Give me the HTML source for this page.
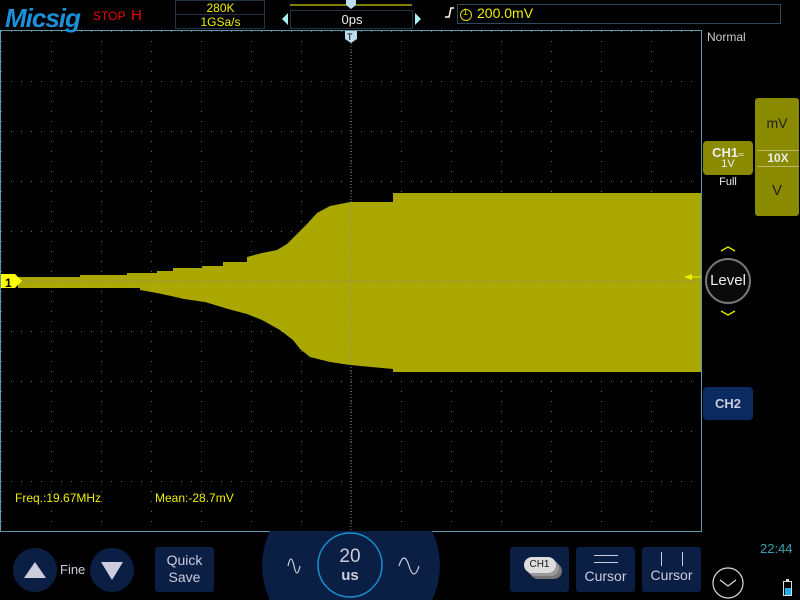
<!DOCTYPE html><html><head><style>
body{margin:0;width:800px;height:600px;background:#000;overflow:hidden;position:relative;font-family:"Liberation Sans",sans-serif}
.a{position:absolute}
.btn{position:absolute;background:#0b1f45;border-radius:3px;color:#ccd;text-align:center;font-size:14px}
</style></head><body>
<svg class="a" style="left:0;top:0" width="800" height="600">
<defs><pattern id="g" x="1" y="31" width="50" height="50" patternUnits="userSpaceOnUse">
<g fill="#666"><rect x="0" y="0" width="1" height="1"/><rect x="10" y="0" width="1" height="1"/><rect x="20" y="0" width="1" height="1"/><rect x="30" y="0" width="1" height="1"/><rect x="40" y="0" width="1" height="1"/><rect x="0" y="10" width="1" height="1"/><rect x="0" y="20" width="1" height="1"/><rect x="0" y="30" width="1" height="1"/><rect x="0" y="40" width="1" height="1"/></g></pattern></defs>
<rect x="1" y="31" width="700" height="500" fill="url(#g)"/>
<polygon fill="#aaa800" points="18,277 80,277 80,275 127,275 127,273 157,273 157,271 173,271 173,268 202,268 202,266 223,266 223,262 247,262 247,257 262,253 277,250 287,244 297,234 307,224 317,213 330,206 350,202 393,202 393,193 701,193 701,372 393,372 393,369 350,365 330,362 310,357 300,349 293,340 280,330 262,320 247,314 228,309 215,305 205,302 184,299 171,296 157,293 140,290 140,288 18,288"/>
<line x1="351" y1="31" x2="351" y2="531" stroke="#888" stroke-dasharray="1,2"/>
<line x1="1" y1="281" x2="701" y2="281" stroke="#888" stroke-dasharray="1,2"/>
<rect x="0.5" y="30.5" width="701" height="501" fill="none" stroke="#5a9aa8"/>
<polygon points="1,274 15,274 22,281 15,288 1,288" fill="#ff0"/>
<text x="5" y="287" font-size="12" font-weight="bold" fill="#000" font-family="Liberation Sans">1</text>
<polygon points="345,31 357,31 357,39 351,43 345,39" fill="#bde"/>
<text x="347" y="40" font-size="9" fill="#000" font-family="Liberation Sans">T</text>
<line x1="290" y1="5" x2="412" y2="5" stroke="#ff0"/>
<polygon points="346,0 356,0 356,5 351,9 346,5" fill="#bde"/>
<rect x="175.5" y="0.5" width="89" height="28" fill="none" stroke="#234"/>
<line x1="176" y1="14.5" x2="264" y2="14.5" stroke="#234"/>
<rect x="290.5" y="10.5" width="122" height="18" fill="none" stroke="#234"/>
<polygon points="288,13 288,25 282,19" fill="#aee"/>
<polygon points="415,13 415,25 421,19" fill="#aee"/>
<rect x="457.5" y="4.5" width="323" height="19" fill="none" stroke="#2a4a5a"/>
<path d="M445,17 L449,17 L451,8 L454,8" stroke="#fff" fill="none" stroke-width="1.5"/>
<circle cx="466" cy="15" r="5.5" fill="none" stroke="#dd0"/>
<polygon points="692,274 684,277 692,280" fill="#ee0"/>
<line x1="692" y1="277" x2="701" y2="277" stroke="#ee0"/>
<circle cx="728" cy="281" r="22" fill="#0a0a0a" stroke="#777" stroke-width="2"/>
<path d="M721,251 L728,247 L735,251 M721,311 L728,315 L735,311" stroke="#dd0" fill="none" stroke-width="1.5"/>
<path d="M270,531 A80,80 0 0 0 270,600 L432,600 A80,80 0 0 0 432,531 Z" fill="#0b1f45"/>
<circle cx="350" cy="565" r="32" fill="none" stroke="#1a8fd0" stroke-width="1.5"/>
<path d="M288,568 q3,-14 6,0 q3,14 6,0" stroke="#ccd" fill="none" stroke-width="1.2" transform="translate(0,-2)"/>
<path d="M399,566 q5,-16 10,0 q5,16 10,0" stroke="#ccd" fill="none" stroke-width="1.2"/>
<circle cx="35" cy="570" r="22" fill="#0b1f45"/><polygon points="24,578 46,578 35,562" fill="#ccd"/>
<circle cx="112" cy="570" r="22" fill="#0b1f45"/><polygon points="101,562 123,562 112,580" fill="#ccd"/>
<circle cx="728" cy="583" r="15" fill="none" stroke="#ddd" stroke-width="1.2"/>
<path d="M720,580 L728,586 L736,580" stroke="#ddd" fill="none" stroke-width="1.2"/>
<rect x="783.5" y="581.5" width="8" height="14" fill="none" stroke="#ddd"/><rect x="785" y="588" width="6" height="7" fill="#1ab0f0"/>
<rect x="786" y="579" width="3" height="2" fill="#ddd"/>
</svg>
<div class="a" style="left:5px;top:3px;font-size:26px;font-weight:bold;font-style:italic;color:#1b8fd8;letter-spacing:-1px">Micsig</div>
<div class="a" style="left:93px;top:9px;font-size:12px;color:#e00">STOP</div>
<div class="a" style="left:131px;top:7px;font-size:15px;color:#e00">H</div>
<div class="a" style="left:176px;top:1px;width:89px;text-align:center;font-size:12px;color:#ee0">280K</div>
<div class="a" style="left:176px;top:15px;width:89px;text-align:center;font-size:12px;color:#ee0">1GSa/s</div>
<div class="a" style="left:291px;top:12px;width:122px;text-align:center;font-size:13px;color:#eee">0ps</div>
<div class="a" style="left:463px;top:7px;font-size:9px;color:#dd0">1</div>
<div class="a" style="left:477px;top:5px;font-size:14px;color:#ee0">200.0mV</div>
<div class="a" style="left:707px;top:30px;font-size:12px;color:#ccc">Normal</div>
<div class="a" style="left:755px;top:98px;width:44px;height:118px;background:#8a8a00;border-radius:3px"></div>
<div class="a" style="left:755px;top:115px;width:44px;text-align:center;font-size:14px;color:#222">mV</div>
<div class="a" style="left:757px;top:150px;width:42px;height:15px;border-top:1px solid #bb6;border-bottom:1px solid #bb6;text-align:center;font-size:12px;font-weight:bold;color:#eee">10X</div>
<div class="a" style="left:755px;top:182px;width:44px;text-align:center;font-size:15px;color:#222">V</div>
<div class="a" style="left:703px;top:141px;width:50px;height:34px;background:#8a8a00;border-radius:4px;color:#eee;text-align:center">
<div style="font-size:13px;font-weight:bold;margin-top:4px">CH1<span style="font-size:8px">═</span></div><div style="font-size:11px;margin-top:-2px">1V</div></div>
<div class="a" style="left:703px;top:176px;width:50px;text-align:center;font-size:11px;color:#eee">Full</div>
<div class="a" style="left:708px;top:272px;width:40px;text-align:center;font-size:15px;color:#eee">Level</div>
<div class="a" style="left:703px;top:387px;width:50px;height:33px;background:#0b2a60;border-radius:4px;color:#ccd;font-size:13px;font-weight:bold;text-align:center;line-height:33px">CH2</div>
<div class="a" style="left:15px;top:491px;font-size:12px;color:#ee0">Freq.:19.67MHz</div>
<div class="a" style="left:155px;top:491px;font-size:12px;color:#ee0">Mean:-28.7mV</div>
<div class="a" style="left:60px;top:562px;font-size:13px;color:#ccd">Fine</div>
<div class="btn" style="left:155px;top:547px;width:59px;height:45px;line-height:17px;padding-top:5px;box-sizing:border-box">Quick<br>Save</div>
<div class="a" style="left:318px;top:548px;width:64px;text-align:center;color:#ccd;font-size:19px;line-height:18px">20<br><span style="font-size:15px;font-weight:bold">us</span></div>
<div class="btn" style="left:510px;top:547px;width:59px;height:45px"><div style="margin:10px auto 0;width:32px;height:16px;background:#ddd;border-radius:8px;color:#111;font-size:10px;line-height:16px;box-shadow:3px 3px 0 #999,6px 6px 0 #777">CH1</div></div>
<div class="btn" style="left:576px;top:547px;width:59px;height:45px"><div style="margin:8px auto 0;width:24px;height:6px;border-top:1px solid #ccd;border-bottom:1px solid #ccd"></div><div style="margin-top:5px">Cursor</div></div>
<div class="btn" style="left:642px;top:547px;width:59px;height:45px"><div style="margin:5px auto 0;width:20px;height:14px;border-left:1px solid #ccd;border-right:1px solid #ccd"></div><div style="margin-top:1px">Cursor</div></div>
<div class="a" style="left:760px;top:541px;font-size:13px;color:#3aa0b0">22:44</div>
</body></html>
